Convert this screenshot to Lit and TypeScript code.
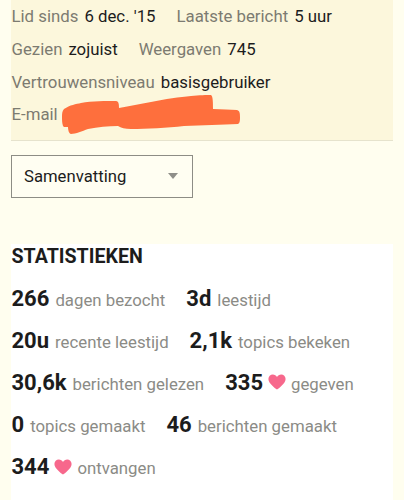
import { LitElement, html, css, svg } from "lit";
import { customElement } from "lit/decorators.js";

const heart = html`<svg class="heart" viewBox="0 0 18 16"><path d="M9 15.6C7.6 14.3 0.4 9.6 0.4 4.9 0.4 2.2 2.4 0.4 4.8 0.4 6.6 0.4 8.2 1.4 9 3 9.8 1.4 11.4 0.4 13.2 0.4 15.6 0.4 17.6 2.2 17.6 4.9 17.6 9.6 10.4 14.3 9 15.6Z"/></svg>`;

const scribble = svg`<path d="M2 14C8 10 14 9 19 8C30 6 44 6 54 6C57 6 57 10 57 13C68 11 78 9 89 7C103 4 118 2 129 1C137 0 145 0 149 0C151 1 151 8 151 14C160 14 168 15 175 15C178 16 178 19 178 22C178 25 178 28 176 29C160 30 140 30 122 31C105 33 85 34 69 34C63 34 59 33 56 31C46 31 36 32 26 34C20 36 14 39 9 39C7 39 6 35 6 32C3 32 1 32 1 31C0 28 0 25 0 22C0 19 0 16 2 14Z"/>`;

type Stat = { n: string; label: string; heart?: boolean };

@customElement("app-root")
export class AppRoot extends LitElement {
  static styles = css`
    :host {
      display: block;
      width: 404px;
      height: 500px;
      overflow: hidden;
      background: #fffeef;
      font-family: Roboto, "Liberation Sans", sans-serif;
      color: #1c1c1c;
    }
    .info {
      margin: 0 11px 0 11px;
      height: 141px;
      box-sizing: border-box;
      background: #fcf7dc;
      border-bottom: 1px solid #e6e3cd;
      padding-left: 0.5px;
      display: flex;
      flex-direction: column;
      font-size: 16.8px;
    }
    .row {
      height: 32.7px;
      display: flex;
      align-items: center;
      white-space: nowrap;
    }
    .pair {
      display: flex;
      align-items: center;
      gap: 6px;
      margin-right: 21px;
    }
    .k {
      color: #7c7b71;
    }
    .v {
      color: #1c1c1c;
    }
    .mail {
      margin-left: -1.5px;
      width: 178px;
      height: 39px;
      fill: #fe6f3d;
      overflow: visible;
    }
    .select {
      margin: 14px 0 0 11px;
      width: 182px;
      height: 43px;
      box-sizing: border-box;
      border: 1px solid #8d8d85;
      background: #fffef2;
      display: flex;
      align-items: center;
      justify-content: space-between;
      padding: 0 14px 1px 12px;
      font-size: 16.7px;
      color: #1c1c1c;
    }
    .caret {
      width: 0;
      height: 0;
      border-left: 5.5px solid transparent;
      border-right: 5.5px solid transparent;
      border-top: 6px solid #8f8f89;
    }
    .stats {
      margin: 46px 11px 0 11px;
      height: 257px;
      padding-left: 0.5px;
      background: #ffffff;
      display: flex;
      flex-direction: column;
    }
    h2 {
      margin: 0 0 7px 0;
      font-size: 19.6px;
      font-weight: 700;
      line-height: 26px;
      color: #1c1c1c;
    }
    .srow {
      height: 42.2px;
      display: flex;
      align-items: center;
      white-space: nowrap;
    }
    .stat {
      display: flex;
      align-items: baseline;
      gap: 6px;
      margin-right: 21px;
    }
    .n {
      font-size: 22px;
      font-weight: 700;
      color: #1c1c1c;
    }
    .l {
      font-size: 16.8px;
      color: #8b8b86;
    }
    .heart {
      width: 18px;
      height: 16px;
      fill: #f7688c;
      align-self: center;
      margin: 0 -1px;
    }
  `;

  private stat(s: Stat) {
    return html`<span class="stat">
      <span class="n">${s.n}</span>
      ${s.heart ? heart : ""}
      <span class="l">${s.label}</span>
    </span>`;
  }

  render() {
    const rows: Stat[][] = [
      [{ n: "266", label: "dagen bezocht" }, { n: "3d", label: "leestijd" }],
      [{ n: "20u", label: "recente leestijd" }, { n: "2,1k", label: "topics bekeken" }],
      [{ n: "30,6k", label: "berichten gelezen" }, { n: "335", label: "gegeven", heart: true }],
      [{ n: "0", label: "topics gemaakt" }, { n: "46", label: "berichten gemaakt" }],
      [{ n: "344", label: "ontvangen", heart: true }],
    ];
    return html`
      <section class="info">
        <div class="row">
          <span class="pair"><span class="k">Lid sinds</span><span class="v">6 dec. '15</span></span>
          <span class="pair"><span class="k">Laatste bericht</span><span class="v">5 uur</span></span>
        </div>
        <div class="row">
          <span class="pair"><span class="k">Gezien</span><span class="v">zojuist</span></span>
          <span class="pair"><span class="k">Weergaven</span><span class="v">745</span></span>
        </div>
        <div class="row">
          <span class="pair"><span class="k">Vertrouwensniveau</span><span class="v">basisgebruiker</span></span>
        </div>
        <div class="row">
          <span class="pair"><span class="k">E-mail</span><svg class="mail" viewBox="0 0 178 39">${scribble}</svg></span>
        </div>
      </section>
      <div class="select"><span>Samenvatting</span><span class="caret"></span></div>
      <section class="stats">
        <h2>STATISTIEKEN</h2>
        ${rows.map((r) => html`<div class="srow">${r.map((s) => this.stat(s))}</div>`)}
      </section>
    `;
  }
}
